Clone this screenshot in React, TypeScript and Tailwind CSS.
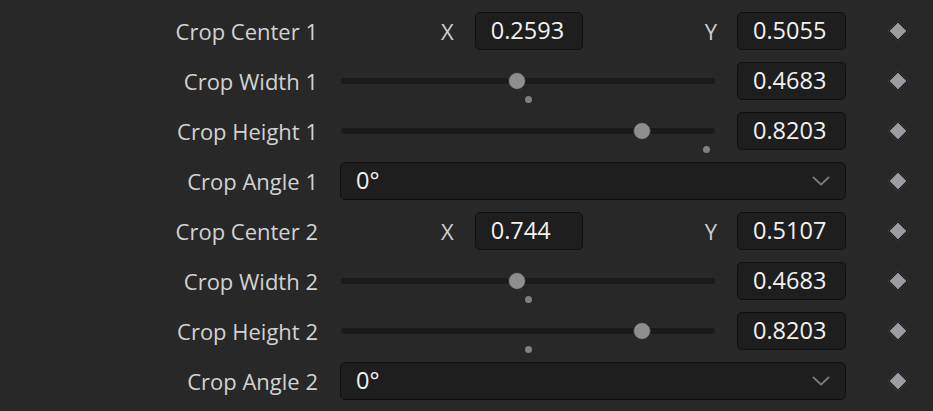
import React from 'react'

type Row =
  | { kind: 'point'; label: string; x: string; y: string }
  | { kind: 'slider'; label: string; value: number; def: number; text: string }
  | { kind: 'combo'; label: string; text: string }

const rows: Row[] = [
  { kind: 'point', label: 'Crop Center 1', x: '0.2593', y: '0.5055' },
  { kind: 'slider', label: 'Crop Width 1', value: 0.4683, def: 0.5, text: '0.4683' },
  { kind: 'slider', label: 'Crop Height 1', value: 0.8203, def: 1, text: '0.8203' },
  { kind: 'combo', label: 'Crop Angle 1', text: '0°' },
  { kind: 'point', label: 'Crop Center 2', x: '0.744', y: '0.5107' },
  { kind: 'slider', label: 'Crop Width 2', value: 0.4683, def: 0.5, text: '0.4683' },
  { kind: 'slider', label: 'Crop Height 2', value: 0.8203, def: 0.5, text: '0.8203' },
  { kind: 'combo', label: 'Crop Angle 2', text: '0°' },
]

function NumBox({ text, w }: { text: string; w: string }) {
  return (
    <div className={`${w} h-[38px] flex items-center pl-[15px] rounded-[5px] border border-[#0f0f0f] bg-[#1e1e1e] text-[#f2f2f2] text-[23.5px]`}>
      {text}
    </div>
  )
}

function Slider({ value, def }: { value: number; def: number }) {
  return (
    <div className="relative flex-1 h-[38px] mr-[22px] ml-px">
      <div className="absolute left-0 right-0 top-[16px] h-[6px] rounded-full bg-[#1a1a1a]" />
      <div
        className="absolute top-[10px] w-[18px] h-[18px] -ml-[9px] rounded-full bg-[#8e8e8e] border border-[#2a2a2a]"
        style={{ left: `calc(9px + ${value} * (100% - 18px))` }}
      />
      <div
        className="absolute top-[34px] w-[7px] h-[7px] -ml-[3.5px] rounded-full bg-[#808080]"
        style={{ left: `calc(9px + ${def} * (100% - 18px))` }}
      />
    </div>
  )
}

function Keyframe() {
  return (
    <div className="ml-[43px] w-[18px] flex justify-center">
      <div className="w-[14px] h-[14px] rotate-45 bg-[#9c9ca2] border-[1.5px] border-[#0a0a0a]" />
    </div>
  )
}

export default function App() {
  return (
    <div
      className="w-[933px] h-[411px] overflow-hidden bg-[#282828] pt-[6px]"
      style={{ fontFamily: '"Open Sans", "Noto Sans", sans-serif' }}
    >
      {rows.map((r, i) => (
        <div key={i} className="h-[50px] flex items-center">
          <div className="w-[318px] text-right text-[22px] text-[#d2d2d2]">{r.label}</div>
          <div className="ml-[22px] w-[506px] flex items-center">
            {r.kind === 'point' && (
              <>
                <span className="ml-[101px] text-[22px] text-[#cfcfcf]">X</span>
                <div className="ml-[21px]">
                  <NumBox text={r.x} w="w-[108px]" />
                </div>
                <span className="ml-auto mr-[20px] text-[22px] text-[#cfcfcf]">Y</span>
                <NumBox text={r.y} w="w-[109px]" />
              </>
            )}
            {r.kind === 'slider' && (
              <>
                <Slider value={r.value} def={r.def} />
                <NumBox text={r.text} w="w-[109px]" />
              </>
            )}
            {r.kind === 'combo' && (
              <div className="w-full h-[38px] flex items-center justify-between pl-[15px] pr-[15px] rounded-[5px] border border-[#0f0f0f] bg-[#1e1e1e] text-[#f2f2f2] text-[23.5px]">
                <span>{r.text}</span>
                <svg width="18" height="10" viewBox="0 0 18 10" fill="none">
                  <path d="M1.5 1.5 L9 8.5 L16.5 1.5" stroke="#777" strokeWidth="2" strokeLinecap="round" strokeLinejoin="round" />
                </svg>
              </div>
            )}
          </div>
          <Keyframe />
        </div>
      ))}
    </div>
  )
}
